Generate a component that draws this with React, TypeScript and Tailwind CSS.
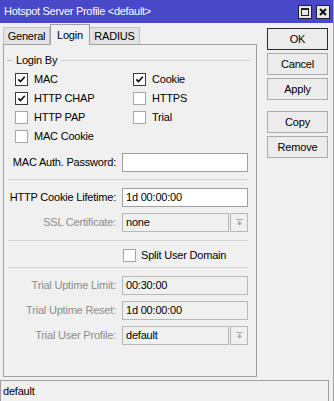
import React from "react";

const font = "font-['Liberation_Sans',Arial,sans-serif] text-[11px] tracking-[-0.2px]";

function Check({ checked }: { checked?: boolean }) {
  return (
    <span
      className={`w-[13px] h-[13px] bg-white border flex items-center justify-center shrink-0 ${
        checked ? "border-[#3a3a3a]" : "border-[#a6a6a6]"
      }`}
    >
      {checked && (
        <svg width="9" height="9" viewBox="0 0 9 9">
          <path d="M1.3 4.3 L3.5 6.6 L7.8 1.8" fill="none" stroke="#111" strokeWidth="1.7" />
        </svg>
      )}
    </span>
  );
}

function CheckItem({ label, checked }: { label: string; checked?: boolean }) {
  return (
    <div className="h-[19px] flex items-center gap-[6px]">
      <Check checked={checked} />
      <span>{label}</span>
    </div>
  );
}

function DropBtn() {
  return (
    <div className="w-[18px] h-[19px] ml-px border border-[#b8b8b8] bg-[#f0f0f0] flex items-center justify-center">
      <svg width="7" height="7" viewBox="0 0 7 7">
        <rect x="0" y="0" width="7" height="1" fill="#a8a8a8" />
        <path d="M2.5 2 H4.5 V4 H6 L3.5 6.5 L1 4 H2.5 Z" fill="#a8a8a8" />
      </svg>
    </div>
  );
}

function Field({
  label,
  value,
  disabled,
  drop,
  className = "",
}: {
  label: string;
  value?: string;
  disabled?: boolean;
  drop?: boolean;
  className?: string;
}) {
  return (
    <div className={`flex items-center h-[19px] ${className}`}>
      <div className={`w-[112px] text-right ${disabled ? "text-[#8c8c8c]" : "text-black"}`}>{label}</div>
      <div
        className={`ml-[6px] h-[19px] border flex items-center px-[3px] ${
          drop ? "w-[107px]" : "w-[126px]"
        } ${disabled ? "bg-[#f0f0f0] border-[#b8b8b8]" : "bg-white border-[#a0a0a0]"}`}
      >
        {value}
      </div>
      {drop && <DropBtn />}
    </div>
  );
}

function Sep({ className = "" }: { className?: string }) {
  return <div className={`ml-[4px] w-[240px] h-px bg-[#d4d4d4] ${className}`} />;
}

function Btn({ label, def }: { label: string; def?: boolean }) {
  return (
    <div
      className={`w-[61px] h-[22px] flex items-center justify-center bg-[#ececec] border ${
        def ? "border-[#2a2a2a]" : "border-[#ababab]"
      }`}
    >
      {label}
    </div>
  );
}

export default function App() {
  return (
    <div className={`w-[334px] h-[401px] bg-[#f0f0f0] flex flex-col border-r border-[#a0a0a0] overflow-hidden ${font}`}>
      {/* title bar */}
      <div className="h-[23px] bg-[#4848c8] flex items-center pl-[4px] pr-[3px] text-white">
        <span className="flex-1 text-[11px] tracking-[-0.3px]">Hotspot Server Profile &lt;default&gt;</span>
        <div className="flex gap-[4px]">
          <div className="w-[14px] h-[14px] bg-[#e8e8e8] border border-[#222] flex items-center justify-center">
            <div className="w-[8px] h-[8px] border border-[#222] border-t-2" />
          </div>
          <div className="w-[14px] h-[14px] bg-[#e8e8e8] border border-[#222] flex items-center justify-center">
            <svg width="8" height="8" viewBox="0 0 8 8">
              <path d="M1 1 L7 7 M7 1 L1 7" stroke="#111" strokeWidth="2" />
            </svg>
          </div>
        </div>
      </div>

      <div className="flex flex-1">
        {/* left: tabs and panel */}
        <div className="pl-[3px] flex flex-col">
          <div className="h-[21px] flex items-end">
            <div className="w-[47px] h-[17px] bg-[#e3e3e3] border border-b-0 border-[#c0c0c0] flex items-center justify-center">
              General
            </div>
            <div className="w-[40px] h-[21px] -mb-px relative z-10 bg-[#f0f0f0] border border-b-0 border-[#a0a0a0] flex items-center justify-center">
              Login
            </div>
            <div className="w-[50px] h-[17px] bg-[#e3e3e3] border border-b-0 border-l-0 border-[#c0c0c0] flex items-center justify-center">
              RADIUS
            </div>
          </div>
          <div className="w-[254px] h-[333px] border border-[#a0a0a0] flex flex-col">
            <div className="mt-[8px] h-[14px] flex items-center pl-[3px] pr-[6px]">
              <div className="w-[5px] h-px bg-[#b9b9b9]" />
              <span className="px-[4px]">Login By</span>
              <div className="flex-1 h-px bg-[#d0d0d0]" />
            </div>
            <div className="mt-[3px] pl-[11px] grid grid-cols-[118px_1fr]">
              <CheckItem label="MAC" checked />
              <CheckItem label="Cookie" checked />
              <CheckItem label="HTTP CHAP" checked />
              <CheckItem label="HTTPS" />
              <CheckItem label="HTTP PAP" />
              <CheckItem label="Trial" />
              <CheckItem label="MAC Cookie" />
            </div>
            <Field className="mt-[7px]" label="MAC Auth. Password:" value="" />
            <Sep className="mt-[7px]" />
            <Field className="mt-[8px]" label="HTTP Cookie Lifetime:" value="1d 00:00:00" />
            <Field className="mt-[6px]" label="SSL Certificate:" value="none" disabled drop />
            <Sep className="mt-[8px]" />
            <div className="mt-[5px] h-[19px] flex items-center pl-[119px] gap-[5px]">
              <Check />
              <span>Split User Domain</span>
            </div>
            <Sep className="mt-[2px]" />
            <Field className="mt-[8px]" label="Trial Uptime Limit:" value="00:30:00" disabled />
            <Field className="mt-[6px]" label="Trial Uptime Reset:" value="1d 00:00:00" disabled />
            <Field className="mt-[6px]" label="Trial User Profile:" value="default" disabled drop />
          </div>
        </div>

        {/* right: buttons */}
        <div className="ml-[10px] pt-[5px] flex flex-col gap-[3px]">
          <Btn label="OK" def />
          <Btn label="Cancel" />
          <Btn label="Apply" />
          <div className="mt-[8px] flex flex-col gap-[3px]">
            <Btn label="Copy" />
            <Btn label="Remove" />
          </div>
        </div>
      </div>

      {/* status bar */}
      <div className="h-[21px] mt-[3px] w-[329px] border-t border-l border-r border-[#a0a0a0] flex items-center pl-[2px]">
        default
      </div>
    </div>
  );
}
